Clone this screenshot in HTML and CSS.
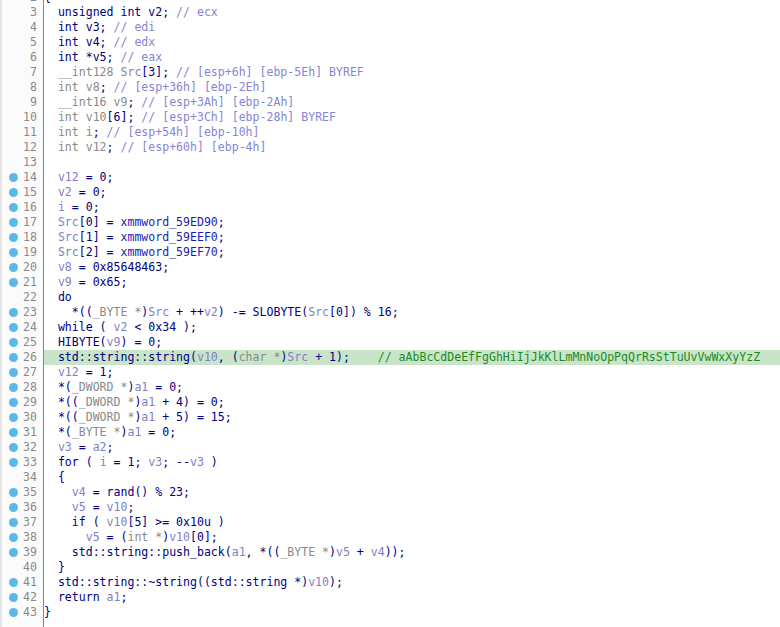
FILE: index.html
```html
<!DOCTYPE html>
<html>
<head>
<meta charset="utf-8">
<link rel="stylesheet" href="styles.css">
</head>
<body>
<div class="view">
<div class="row"><div class="gut">2</div><div class="src">{</div></div>
<div class="row"><div class="gut">3</div><div class="src">  unsigned int v2; <span class="c">// ecx</span></div></div>
<div class="row"><div class="gut">4</div><div class="src">  int v3; <span class="c">// edi</span></div></div>
<div class="row"><div class="gut">5</div><div class="src">  int v4; <span class="c">// edx</span></div></div>
<div class="row"><div class="gut">6</div><div class="src">  int *v5; <span class="c">// eax</span></div></div>
<div class="row"><div class="gut">7</div><div class="src">  <span class="t">__int128 Src</span>[3]; <span class="c">// [esp+6h] [ebp-5Eh] BYREF</span></div></div>
<div class="row"><div class="gut">8</div><div class="src">  <span class="t">int v8</span>; <span class="c">// [esp+36h] [ebp-2Eh]</span></div></div>
<div class="row"><div class="gut">9</div><div class="src">  <span class="t">__int16 v9</span>; <span class="c">// [esp+3Ah] [ebp-2Ah]</span></div></div>
<div class="row"><div class="gut">10</div><div class="src">  <span class="t">int v10</span>[6]; <span class="c">// [esp+3Ch] [ebp-28h] BYREF</span></div></div>
<div class="row"><div class="gut">11</div><div class="src">  <span class="t">int i</span>; <span class="c">// [esp+54h] [ebp-10h]</span></div></div>
<div class="row"><div class="gut">12</div><div class="src">  <span class="t">int v12</span>; <span class="c">// [esp+60h] [ebp-4h]</span></div></div>
<div class="row"><div class="gut">13</div><div class="src"> </div></div>
<div class="row"><div class="gut bp">14</div><div class="src">  <span class="v">v12</span> = 0;</div></div>
<div class="row"><div class="gut bp">15</div><div class="src">  <span class="v">v2</span> = 0;</div></div>
<div class="row"><div class="gut bp">16</div><div class="src">  <span class="v">i</span> = 0;</div></div>
<div class="row"><div class="gut bp">17</div><div class="src">  <span class="v">Src</span>[0] = <span class="g">xmmword_59ED90</span>;</div></div>
<div class="row"><div class="gut bp">18</div><div class="src">  <span class="v">Src</span>[1] = <span class="g">xmmword_59EEF0</span>;</div></div>
<div class="row"><div class="gut bp">19</div><div class="src">  <span class="v">Src</span>[2] = <span class="g">xmmword_59EF70</span>;</div></div>
<div class="row"><div class="gut bp">20</div><div class="src">  <span class="v">v8</span> = 0x85648463;</div></div>
<div class="row"><div class="gut bp">21</div><div class="src">  <span class="v">v9</span> = 0x65;</div></div>
<div class="row"><div class="gut">22</div><div class="src">  do</div></div>
<div class="row"><div class="gut bp">23</div><div class="src">    *((<span class="t">_BYTE *</span>)<span class="v">Src</span> + ++<span class="v">v2</span>) -= SLOBYTE(<span class="v">Src</span>[0]) % 16;</div></div>
<div class="row"><div class="gut bp">24</div><div class="src">  while ( <span class="v">v2</span> &lt; 0x34 );</div></div>
<div class="row"><div class="gut bp">25</div><div class="src">  HIBYTE(<span class="v">v9</span>) = 0;</div></div>
<div class="row"><div class="gut bp">26</div><div class="src hl">  std::string::string(<span class="v">v10</span>, (<span class="t">char *</span>)<span class="v">Src</span> + 1);    <span class="s">// aAbBcCdDeEfFgGhHiIjJkKlLmMnNoOpPqQrRsStTuUvVwWxXyYzZ</span></div></div>
<div class="row"><div class="gut bp">27</div><div class="src">  <span class="v">v12</span> = 1;</div></div>
<div class="row"><div class="gut bp">28</div><div class="src">  *(<span class="t">_DWORD *</span>)<span class="v">a1</span> = 0;</div></div>
<div class="row"><div class="gut bp">29</div><div class="src">  *((<span class="t">_DWORD *</span>)<span class="v">a1</span> + 4) = 0;</div></div>
<div class="row"><div class="gut bp">30</div><div class="src">  *((<span class="t">_DWORD *</span>)<span class="v">a1</span> + 5) = 15;</div></div>
<div class="row"><div class="gut bp">31</div><div class="src">  *(<span class="t">_BYTE *</span>)<span class="v">a1</span> = 0;</div></div>
<div class="row"><div class="gut bp">32</div><div class="src">  <span class="v">v3</span> = <span class="v">a2</span>;</div></div>
<div class="row"><div class="gut bp">33</div><div class="src">  for ( <span class="v">i</span> = 1; <span class="v">v3</span>; --<span class="v">v3</span> )</div></div>
<div class="row"><div class="gut">34</div><div class="src">  {</div></div>
<div class="row"><div class="gut bp">35</div><div class="src">    <span class="v">v4</span> = rand() % 23;</div></div>
<div class="row"><div class="gut bp">36</div><div class="src">    <span class="v">v5</span> = <span class="v">v10</span>;</div></div>
<div class="row"><div class="gut bp">37</div><div class="src">    if ( <span class="v">v10</span>[5] &gt;= 0x10u )</div></div>
<div class="row"><div class="gut bp">38</div><div class="src">      <span class="v">v5</span> = (<span class="t">int *</span>)<span class="v">v10</span>[0];</div></div>
<div class="row"><div class="gut bp">39</div><div class="src">    std::string::push_back(<span class="v">a1</span>, *((<span class="t">_BYTE *</span>)<span class="v">v5</span> + <span class="v">v4</span>));</div></div>
<div class="row"><div class="gut">40</div><div class="src">  }</div></div>
<div class="row"><div class="gut bp">41</div><div class="src">  std::string::~string((std::string *)<span class="v">v10</span>);</div></div>
<div class="row"><div class="gut bp">42</div><div class="src">  return <span class="v">a1</span>;</div></div>
<div class="row"><div class="gut bp">43</div><div class="src">}</div></div>
<div class="row fill"><div class="gut"></div><div class="src"></div></div>
</div>
</body>
</html>
```

FILE: styles.css
```css
html, body {
  margin: 0;
  padding: 0;
  background: #ffffff;
  overflow: hidden;
}

.view {
  display: flex;
  flex-direction: column;
  margin-top: -10px;
  height: calc(100vh + 10px);
  font-family: "DejaVu Sans Mono", "Liberation Mono", monospace;
  font-size: 11.55px;
  line-height: 15px;
  color: #000080;
}

.row {
  display: flex;
  height: 15px;
  flex: none;
}

.row.fill {
  flex: 1;
}

.gut {
  position: relative;
  box-sizing: border-box;
  width: 44px;
  flex: none;
  padding-right: 6px;
  text-align: right;
  color: #8a8a8a;
  background: #fbfbfb;
  border-left: 2px solid #e4e4e4;
  border-right: 1px solid #5b8fc2;
}

.gut.bp::before {
  content: "";
  position: absolute;
  left: 7px;
  top: 3px;
  width: 9px;
  height: 9px;
  border-radius: 50%;
  background: #5bb8ea;
}

.src {
  flex: 1;
  white-space: pre;
}

.src.hl {
  background: #c9e5c9;
}

.c {
  color: #8585d6;
}

.t {
  color: #8a8a8a;
}

.v {
  color: #8080c8;
}

.g {
  color: #1c1cb4;
}

.s {
  color: #1f8a1f;
}
```
